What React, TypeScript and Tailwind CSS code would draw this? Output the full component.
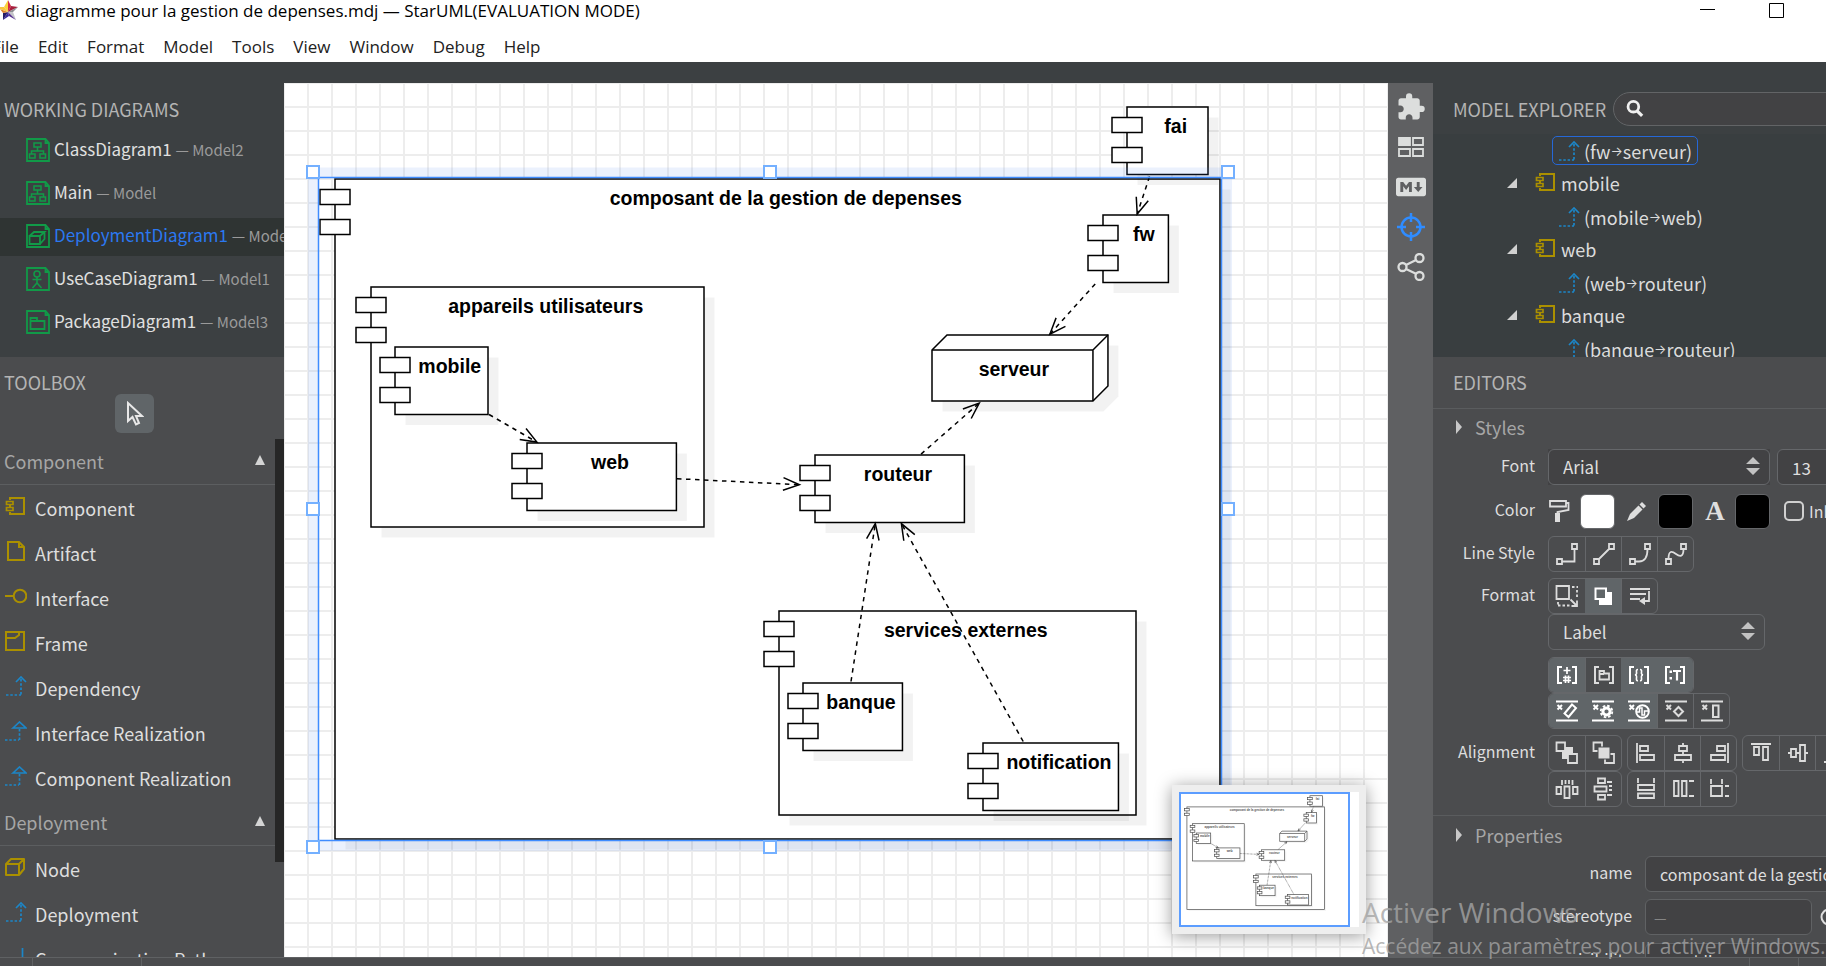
import React from "react";
import { MdExtension } from "react-icons/md";
import { FaMarkdown } from "react-icons/fa";

type Box = { label: string; x: number; y: number; r: number; b: number };

const COMPONENTS: Box[] = [
  { label: "composant de la gestion de depenses", x: 34, y: 64, r: 624, b: 504 },
  { label: "appareils utilisateurs", x: 58, y: 136, r: 280, b: 296 },
  { label: "mobile", x: 74, y: 176, r: 136, b: 221 },
  { label: "web", x: 162, y: 240, r: 261.6, b: 285 },
  { label: "fai", x: 562, y: 16, r: 616, b: 61 },
  { label: "fw", x: 546, y: 88, r: 589.6, b: 133 },
  { label: "routeur", x: 354, y: 248, r: 453.6, b: 293 },
  { label: "services externes", x: 330, y: 352, r: 568, b: 488 },
  { label: "banque", x: 346, y: 400, r: 412.3, b: 445 },
  { label: "notification", x: 466, y: 440, r: 556.3, b: 485 },
];

const LINKS: [number, number, number, number][] = [
  [136.7, 221, 168.6, 239.4],
  [262, 263.8, 343.6, 267.8],
  [424.7, 247.4, 463.5, 213.4],
  [540.8, 134, 510.6, 167.4],
  [577, 62.4, 568.8, 87.4],
  [378, 399, 394.2, 293.7],
  [492.8, 439, 411.6, 293.7],
];

function ComponentShape({ label, x, y, r, b }: Box) {
  const w = r - x;
  return (
    <g stroke="#000" fill="#fff">
      <rect x={x + 7} y={y + 7} width={w} height={b - y} fill="#000" fillOpacity={0.05} stroke="none" />
      <rect x={x} y={y} width={w} height={b - y} />
      <rect x={x - 10} y={y + 7} width={20} height={10} />
      <rect x={x - 10} y={y + 27} width={20} height={10} />
      <text
        x={x + (w + 11) / 2}
        y={y + 17.5}
        textAnchor="middle"
        stroke="none"
        fill="#000"
        className="font-['Liberation_Sans',Arial,sans-serif] text-[13px] font-bold"
      >
        {label}
      </text>
    </g>
  );
}

function Link({ p }: { p: [number, number, number, number] }) {
  const [x1, y1, x2, y2] = p;
  const len = Math.hypot(x2 - x1, y2 - y1);
  const ux = (x2 - x1) / len;
  const uy = (y2 - y1) / len;
  const bx = x2 - ux * 10.8;
  const by = y2 - uy * 10.8;
  return (
    <g stroke="#000" fill="none">
      <line x1={x1} y1={y1} x2={x2} y2={y2} strokeDasharray="3 3" />
      <path d={`M${bx - uy * 4.2} ${by + ux * 4.2}L${x2} ${y2}L${bx + uy * 4.2} ${by - ux * 4.2}`} />
    </g>
  );
}

function Diagram() {
  return (
    <g>
      {COMPONENTS.map((c) => (
        <ComponentShape key={c.label} {...c} />
      ))}
      <g stroke="#000" fill="#fff">
        <path d="M439 219V185L449 175H556.3V209L546.3 219Z" fill="#000" fillOpacity={0.05} stroke="none" />
        <path d="M432 178L442 168H549.3V202L539.3 212H432Z" />
        <path d="M432 178H539.3V212M539.3 178L549.3 168" fill="none" />
        <text
          x={486.6}
          y={195.5}
          textAnchor="middle"
          stroke="none"
          fill="#000"
          className="font-['Liberation_Sans',Arial,sans-serif] text-[13px] font-bold"
        >
          serveur
        </text>
      </g>
      {LINKS.map((p, i) => (
        <Link key={i} p={p} />
      ))}
    </g>
  );
}

const HANDLES = [
  [29, 89],
  [486, 89],
  [944, 89],
  [29, 426],
  [944, 426],
  [29, 764],
  [486, 764],
];

function Canvas() {
  return (
    <main className="relative min-w-0 flex-1 overflow-hidden bg-white">
      <svg className="block h-full w-full" role="img" aria-label="Deployment diagram">
        <defs>
          <pattern id="grid" width="24" height="24" patternUnits="userSpaceOnUse">
            <path d="M0 0H24V24H0ZM1 1V23H23V1Z" fill="#ededed" fillRule="evenodd" />
          </pattern>
        </defs>
        <rect width="100%" height="100%" fill="url(#grid)" />
        <g transform="scale(1.5)">
          <Diagram />
        </g>
        <path fillRule="evenodd" d="M24 84.5H948V768H24ZM35 95V757H937V95Z" fill="#4a80f0" fillOpacity={0.11} />
        <rect x={34.5} y={94.5} width={903} height={663} fill="none" stroke="#3f8cff" strokeWidth={1.5} />
        {HANDLES.map(([x, y]) => (
          <rect key={`${x}-${y}`} x={x - 6} y={y - 6} width={12} height={12} fill="#fff" stroke="#74b0ff" strokeWidth={2} />
        ))}
      </svg>
      <div className="absolute right-[22px] bottom-[23px] h-[149px] w-[194px] bg-[#eeeeee] p-[7px] shadow-[0_2px_16px_rgba(0,0,0,0.4)]">
        <div className="h-full w-full bg-white">
          <div className="h-full w-[171px] border-2 border-[#5c9dff]">
            <svg className="block h-full w-full overflow-visible" aria-hidden="true">
              <g transform="translate(-2 -2) scale(0.233)" strokeWidth={3} opacity={0.7}>
                <Diagram />
              </g>
            </svg>
          </div>
        </div>
      </div>
    </main>
  );
}

/* ---------- icons ---------- */

function ComponentIcon() {
  return (
    <svg width="20" height="18" viewBox="0 0 20 18" fill="none" stroke="#ab9000" strokeWidth="2" aria-hidden="true" className="shrink-0">
      <path d="M5 3V1H19V17H5V15M5 8V10" />
      <path d="M1.5 4.5H8V7.5H1.5ZM1.5 10.5H8V13.5H1.5Z" strokeWidth="1.7" />
    </svg>
  );
}
function ArtifactIcon() {
  return (
    <svg width="20" height="20" viewBox="0 0 20 20" fill="none" stroke="#ab9000" strokeWidth="2" aria-hidden="true">
      <path d="M3 1H14L19 6V19H3ZM14 1V6H19" />
    </svg>
  );
}
function InterfaceIcon() {
  return (
    <svg width="22" height="16" viewBox="0 0 22 16" fill="none" stroke="#ab9000" strokeWidth="2" aria-hidden="true">
      <path d="M0 8H8" />
      <circle cx="15" cy="8" r="6.3" />
    </svg>
  );
}
function FrameIcon() {
  return (
    <svg width="20" height="20" viewBox="0 0 20 20" fill="none" stroke="#ab9000" strokeWidth="2" aria-hidden="true">
      <path d="M1 1H19V19H1ZM1 7H10L14 4V1" />
    </svg>
  );
}
function NodeIcon() {
  return (
    <svg width="20" height="18" viewBox="0 0 20 18" fill="none" stroke="#ab9000" strokeWidth="2" strokeLinejoin="round" aria-hidden="true">
      <path d="M1 6H14V17H1ZM1 6L6 1H19L14 6M19 1V11L14 17" />
    </svg>
  );
}
function DependencyIcon() {
  return (
    <svg width="22" height="20" viewBox="0 0 22 20" fill="none" stroke="#1c86c8" strokeWidth="1.7" aria-hidden="true" className="shrink-0">
      <path d="M11 6L16 1L21 6" />
      <path d="M16 3V19M1 19H16" strokeDasharray="2.5 1.8" />
    </svg>
  );
}
function RealizationIcon() {
  return (
    <svg width="22" height="20" viewBox="0 0 22 20" fill="none" stroke="#1c86c8" strokeWidth="1.7" aria-hidden="true">
      <path d="M8 7L14.5 1L21 7Z" />
      <path d="M14.5 8V19M0 19H14" strokeDasharray="2.5 1.8" />
    </svg>
  );
}
function PathIcon() {
  return (
    <svg width="22" height="20" viewBox="0 0 22 20" fill="none" stroke="#1c86c8" strokeWidth="1.7" aria-hidden="true">
      <path d="M17.5 1V19H1" />
    </svg>
  );
}

function DocIcon({ children }: { children: React.ReactNode }) {
  return (
    <svg width="24" height="24" viewBox="0 0 24 24" fill="none" stroke="#119a48" strokeWidth="1.8" aria-hidden="true" className="shrink-0">
      <path d="M1 1H19.5L23 5V23H1ZM19.5 1V5H23" />
      {children}
    </svg>
  );
}
const classGlyph = <path d="M8 5H15V9H8ZM11.5 9V13M5.5 16V13H17.5V16M3.5 16H9V20H3.5ZM14 16H19.5V20H14Z" strokeWidth="1.5" />;
const cubeGlyph = <path d="M3.5 12H14V20H3.5ZM3.5 12L8 8H18.5L14 12M18.5 8V15L14 20" strokeWidth="1.8" />;
const actorGlyph = (
  <g strokeWidth="1.6">
    <circle cx="11" cy="7" r="3" />
    <path d="M11 10V16M6.5 12.5H15.5M6.5 21L11 16L15.5 21" />
  </g>
);
const packageGlyph = <path d="M4.5 8H11V11H18.5V19H4.5ZM4.5 11H11" strokeWidth="1.8" />;

function I({ children }: { children: React.ReactNode }) {
  return (
    <svg width="24" height="24" viewBox="0 0 24 24" fill="none" stroke="currentColor" strokeWidth="1.8" aria-hidden="true" className="shrink-0">
      {children}
    </svg>
  );
}

const lineStyles: [string, React.ReactNode][] = [
  ["Rectilinear", <path d="M2 17H7V22H2ZM17 2H22V7H17ZM7 19.5H19.5V7" />],
  ["Oblique", <path d="M2 17H7V22H2ZM17 2H22V7H17ZM7 17L17 7" />],
  ["Rounded rectilinear", <path d="M2 17H7V22H2ZM17 2H22V7H17ZM7 19.5H11Q19.5 19.5 19.5 7" />],
  ["Curve", <path d="M2 17H7V22H2ZM17 2H22V7H17ZM4.5 17C4.5 8 8 9 12 12S19.5 15 19.5 7" />],
];

const formatIcons: [string, React.ReactNode, boolean][] = [
  [
    "Auto resize",
    <g>
      <path d="M1.5 2H14V15H1.5Z" />
      <path d="M17 3H23M22 6V14M3 18V22M3 21.5H15" strokeDasharray="2.5 2" />
      <path d="M15.5 15.5L22 22M22 16.5V22H16.5" />
    </g>,
    false,
  ],
  [
    "Show shadow",
    <g>
      <path d="M8 8H21V21H8Z" fill="currentColor" stroke="none" />
      <path d="M4.5 4.5H15V15H4.5Z" fill="#606668" strokeWidth="2" />
    </g>,
    true,
  ],
  [
    "Word wrap",
    <g>
      <path d="M2 5H22M2 10H18M2 15H12M21 7V17H14" />
      <path d="M17 13V21L11 17Z" fill="currentColor" stroke="none" />
    </g>,
    false,
  ],
];

const bracket = <path d="M7 4H3V20H7M17 4H21V20H17" strokeWidth="2" />;
const bracketIcons: [string, React.ReactNode, boolean][] = [
  ["Show visibility", <g>{bracket}<path d="M12 4V11M8.5 7.5H15.5M10.5 12.5V20M13.5 12.5V20M8 14.5H16M8 17.5H16" strokeWidth="1.7" /></g>, true],
  ["Show namespace", <g>{bracket}<path d="M7.5 8H12V10.5H17V16.5H7.5ZM7.5 11H12" strokeWidth="1.8" /></g>, false],
  ["Show property", <g>{bracket}<path d="M11 6.5Q9 6.5 9.5 9T8 12Q10 12 9.5 15T11 17.5M13 6.5Q15 6.5 14.5 9T16 12Q14 12 14.5 15T13 17.5" strokeWidth="1.6" /></g>, true],
  ["Show type", <g>{bracket}<path d="M10 8H18M14 8V17.5" strokeWidth="2.2" /><path d="M6.5 7.5H9V10H6.5ZM6.5 14H9V16.5H6.5Z" fill="currentColor" stroke="none" /></g>, true],
];

const bars = <path d="M1 2.5H23M1 21.5H23M2.5 6L7 10.5M7 6L2.5 10.5" strokeWidth="2" />;
const suppressIcons: [string, React.ReactNode, boolean][] = [
  ["Suppress attributes", <g>{bars}<path d="M17 5.5L21 9L13.5 18L9.5 14.5Z" strokeWidth="2" /></g>, true],
  [
    "Suppress operations",
    <g>
      {bars}
      <circle cx="15.5" cy="12.5" r="3.6" strokeWidth="3" />
      <circle cx="15.5" cy="12.5" r="5.8" strokeWidth="1.8" strokeDasharray="2.6 1.95" />
    </g>,
    true,
  ],
  ["Suppress receptions", <g>{bars}<circle cx="15.5" cy="12.5" r="6.3" strokeWidth="2" /><path d="M9.5 13H12.5V9H15V16H17.5V12H22" strokeWidth="1.5" /></g>, true],
  ["Suppress literals", <g>{bars}<path d="M14.5 8L19 12.5L14.5 17L10 12.5Z" strokeWidth="2" /></g>, false],
  ["Suppress columns", <g>{bars}<path d="M13 6.5H18.5V18H13Z" strokeWidth="2" /></g>, false],
];

type Named = [string, React.ReactNode];
const alignRow1: Named[][] = [
  [
    ["Bring to front", <g><path d="M7 6H18V18H7Z" fill="currentColor" stroke="none" /><path d="M1.5 1.5H10V10H1.500ZM13 13H22V22H13Z" fill="#4b4c4e" /></g>],
    ["Send to back", <g><path d="M1.5 1.5H10V10H1.500ZM13 13H22V22H13Z" /><path d="M6 6H18V18H6Z" fill="currentColor" stroke="#4b4c4e" strokeWidth="1" /></g>],
  ],
  [
    ["Align left", <path d="M3 2V22M6 5H14V10H6ZM6 14H20V19H6Z" />],
    ["Align center", <path d="M12 2V5M12 10V14M12 19V22M8 5H16V10H8ZM4 14H20V19H4Z" />],
    ["Align right", <path d="M21 2V22M10 5H18V10H10ZM4 14H18V19H4Z" />],
  ],
  [
    ["Align top", <path d="M2 3H22M5 6H10V14H5ZM14 6H19V19H14Z" />],
    ["Align middle", <path d="M2 12H5M10 12H14M19 12H22M5 8H10V16H5ZM14 4H19V20H14Z" />],
    ["Align bottom", <path d="M2 21H22M5 10H10V18H5ZM14 5H19V18H14Z" />],
  ],
];
const alignRow2: Named[][] = [
  [
    ["Space equally horizontally", <path d="M1.5 10H6V17H1.500ZM9.500 9.500H14.500V21H9.500ZM18 10H22.500V17H18ZM7 3V8M10.500 3V7M14 3V7M17.500 3V8" />],
    ["Space equally vertically", <path d="M6 1.500H13V6H6ZM2.500 9.500H14.500V14.500H2.500ZM6 18H13V22.500H6ZM15 5H20M17 9H20M17 13H20M15 18H20" />],
  ],
  [
    ["Same width", <path d="M4 1V6M20 1V6M4 8H20V13H4ZM4 16.500H20V21H4Z" />],
    ["Same height", <path d="M3 4H7.500V19H3ZM11 4H15.500V19H11ZM18 4H23M18 19H23" />],
    ["Same size", <path d="M4 2V7M15 2V7M4 9H15V19H4ZM18 9H22M18 19H22" />],
  ],
];

function ToolGroup({ items }: { items: [string, React.ReactNode, boolean?][] }) {
  return (
    <div className="flex h-9 shrink-0 overflow-hidden rounded-md border border-[#65676a]">
      {items.map(([name, icon, on], i) => (
        <button
          key={name}
          type="button"
          aria-label={name}
          className={
            "flex w-9 items-center justify-center " +
            (on ? "bg-[#606568] text-white" : i > 0 ? "border-l border-[#65676a] text-[#dcdcdc]" : "text-[#dcdcdc]")
          }
        >
          <I>{icon}</I>
        </button>
      ))}
    </div>
  );
}

function SelectBox({ id, label, value, className }: { id: string; label?: string; value: string; className: string }) {
  return (
    <div className={"relative h-9 shrink-0 " + className}>
      <select id={id} aria-label={label} defaultValue={value} className="h-full w-full appearance-none rounded-md border border-[#65676a] bg-inherit pl-3.5 text-[17px] text-[#dedede]">
        <option>{value}</option>
      </select>
      <svg className="pointer-events-none absolute top-2 right-2.5" width="14" height="18" viewBox="0 0 14 18" fill="#c2c2c2" aria-hidden="true">
        <path d="M7 0L14 7H0ZM7 18L0 11H14Z" />
      </svg>
    </div>
  );
}

/* ---------- panels ---------- */

const MENUS = ["File", "Edit", "Format", "Model", "Tools", "View", "Window", "Debug", "Help"];

function TitleBar() {
  return (
    <header className="h-[62px] shrink-0 overflow-hidden bg-white font-['Open_Sans',sans-serif] text-black">
      <div className="flex h-[22px] items-center">
        <svg width="19" height="22" viewBox="0 0 19 22" aria-hidden="true" className="shrink-0">
          <path d="M8 0L8 12L4 7Z" fill="#fbd23c" />
          <path d="M8 0L11 6L8 12Z" fill="#d32b45" />
          <path d="M11 6L18 7L8 12Z" fill="#a81f3c" />
          <path d="M18 7L13 12L8 12Z" fill="#8c8c90" />
          <path d="M13 12L16 20L8 12Z" fill="#c4c4c8" />
          <path d="M16 20L9 16L8 12Z" fill="#55308c" />
          <path d="M9 16L3 20L8 12Z" fill="#3a2a9c" />
          <path d="M3 20L3 13L8 12Z" fill="#241c66" />
          <path d="M0 9L8 12L3 13Z" fill="#e0832c" />
          <path d="M0 7L4 7L8 12L0 9Z" fill="#f6c63c" />
        </svg>
        <h1 className="ml-1.5 text-[17px] whitespace-nowrap">diagramme pour la gestion de depenses.mdj — StarUML(EVALUATION MODE)</h1>
        <div className="ml-auto flex items-center">
          <button type="button" aria-label="Minimize" className="mr-[54px] flex">
            <svg width="15" height="16" viewBox="0 0 15 16" stroke="#000"><path d="M0 6.500H15" /></svg>
          </button>
          <button type="button" aria-label="Maximize" className="mr-[42px] flex">
            <svg width="15" height="16" viewBox="0 0 15 16" fill="none" stroke="#000"><path d="M.5 .5H14.500V14.500H.5Z" /></svg>
          </button>
        </div>
      </div>
      <nav className="-ml-2 flex h-[49px] items-center gap-[19px]">
        {MENUS.map((m) => (
          <button key={m} type="button" className="text-[17px] text-[#222]">
            {m}
          </button>
        ))}
      </nav>
    </header>
  );
}

const DIAGRAMS: [string, string, React.ReactNode, boolean][] = [
  ["ClassDiagram1", "Model2", classGlyph, false],
  ["Main", "Model", classGlyph, false],
  ["DeploymentDiagram1", "Model", cubeGlyph, true],
  ["UseCaseDiagram1", "Model1", actorGlyph, false],
  ["PackageDiagram1", "Model3", packageGlyph, false],
];

const SECTIONS: [string, [string, React.ReactNode][]][] = [
  [
    "Component",
    [
      ["Component", <ComponentIcon />],
      ["Artifact", <ArtifactIcon />],
      ["Interface", <InterfaceIcon />],
      ["Frame", <FrameIcon />],
      ["Dependency", <DependencyIcon />],
      ["Interface Realization", <RealizationIcon />],
      ["Component Realization", <RealizationIcon />],
    ],
  ],
  [
    "Deployment",
    [
      ["Node", <NodeIcon />],
      ["Deployment", <DependencyIcon />],
      ["Communication Path", <PathIcon />],
    ],
  ],
];

function LeftPanel() {
  return (
    <aside className="flex w-[284px] shrink-0 flex-col overflow-hidden">
      <section className="h-[274px] shrink-0 bg-[#3c4042]">
        <h2 className="flex h-12 items-center pt-1 pl-1 text-[18px] text-[#b4b4b4]">WORKING DIAGRAMS</h2>
        <ul className="flex flex-col gap-[5px] pt-px">
          {DIAGRAMS.map(([name, model, glyph, active]) => (
            <li key={name}>
              <a
                href="#"
                className={
                  "flex h-[38px] items-center gap-1 pb-0.5 pl-[26px] text-[17px] whitespace-nowrap " +
                  (active ? "bg-[#2f3433] text-[#2b78f0]" : "text-[#e0e0e0]")
                }
              >
                <DocIcon>{glyph}</DocIcon>
                <span className="pb-0.5">
                  {name} <span className="text-[15px] text-[#9a9a9a]">— {model}</span>
                </span>
              </a>
            </li>
          ))}
        </ul>
      </section>
      <section className="flex min-h-0 flex-1 flex-col bg-[#4b4c4e]">
        <h2 className="flex h-[37px] shrink-0 items-end pl-1 text-[18px] text-[#b4b4b4]">TOOLBOX</h2>
        <div className="flex h-[45px] shrink-0 justify-center pr-[15px]">
          <button type="button" aria-label="Select" className="flex h-[39px] w-[39px] items-center justify-center rounded-md bg-[#606568]">
            <svg width="18" height="25" viewBox="0 0 18 25" fill="none" stroke="#e8e8e8" strokeWidth="2" aria-hidden="true">
              <path d="M2 2V20L6.500 16L10 23.500L13 22L10 15H16Z" />
            </svg>
          </button>
        </div>
        <div className="flex min-h-0 flex-1">
          <div className="min-w-0 flex-1 overflow-hidden">
            {SECTIONS.map(([title, items]) => (
              <div key={title}>
                <button type="button" className="flex h-[46px] w-full items-center justify-between border-b border-[#5c5e60] pr-[10px] pb-0.5 pl-1 text-[18px] text-[#a6a6a6]">
                  {title}
                  <svg width="10" height="10" viewBox="0 0 10 10" fill="#d4d4d4" aria-hidden="true" className="mb-0.5"><path d="M5 0L10 10H0Z" /></svg>
                </button>
                <ul>
                  {items.map(([name, icon]) => (
                    <li key={name}>
                      <button type="button" className="flex h-[45px] w-full items-center text-[18px] whitespace-nowrap text-[#dedede]">
                        <span className="flex w-[35px] shrink-0 pb-1 pl-[5px]">{icon}</span>
                        {name}
                      </button>
                    </li>
                  ))}
                </ul>
              </div>
            ))}
          </div>
          <div className="h-[423px] w-[9px] shrink-0 bg-[#262626]" />
        </div>
      </section>
    </aside>
  );
}

function SideBar() {
  return (
    <nav className="flex w-[45px] shrink-0 flex-col items-center bg-[#5f6062] pt-1 text-[#dcdedd]">
      <button type="button" aria-label="Extensions" className="flex h-10 items-center"><MdExtension size={30} /></button>
      <button type="button" aria-label="Layout" className="flex h-10 items-center">
        <svg width="26" height="20" viewBox="0 0 26 20" fill="none" stroke="currentColor" strokeWidth="1.8">
          <path d="M1 1H12V8H1Z" fill="currentColor" />
          <path d="M15 1H25V8H15ZM1 12H12V19H1ZM15 12H25V19H15Z" />
        </svg>
      </button>
      <button type="button" aria-label="Markdown" className="flex h-10 items-center"><FaMarkdown size={30} /></button>
      <button type="button" aria-label="Navigator" className="flex h-10 items-center text-[#2f8cff]">
        <svg width="28" height="28" viewBox="0 0 28 28" fill="none" stroke="currentColor" strokeWidth="2.5">
          <circle cx="14" cy="14" r="9.5" />
          <path d="M14 0V9M14 19V28M0 14H9M19 14H28" />
        </svg>
      </button>
      <button type="button" aria-label="Relationships" className="flex h-10 items-center">
        <svg width="28" height="28" viewBox="0 0 28 28" fill="none" stroke="currentColor" strokeWidth="2.3">
          <circle cx="5.5" cy="14" r="4" />
          <circle cx="22.5" cy="5" r="4" />
          <circle cx="22.5" cy="23" r="4" />
          <path d="M9 12L19 7M9 16L19.500 21" />
        </svg>
      </button>
    </nav>
  );
}

type Row = { from?: string; to?: string; name?: string; selected?: boolean };
const TREE: Row[] = [
  { from: "fw", to: "serveur", selected: true },
  { name: "mobile" },
  { from: "mobile", to: "web" },
  { name: "web" },
  { from: "web", to: "routeur" },
  { name: "banque" },
  { from: "banque", to: "routeur" },
];

function ModelExplorer() {
  return (
    <section className="flex h-[274px] shrink-0 flex-col bg-[#3c4042]">
      <div className="flex h-[51px] shrink-0 items-center">
        <h2 className="w-[180px] shrink-0 pl-5 text-[18px] whitespace-nowrap text-[#b4b4b4]">MODEL EXPLORER</h2>
        <label className="flex h-[34px] w-[240px] shrink-0 items-center rounded-full border border-[#626466] bg-[#424244] pl-3">
          <svg width="19" height="19" viewBox="0 0 19 19" fill="none" stroke="#f0f0f0" strokeWidth="3" aria-hidden="true">
            <circle cx="8" cy="7.5" r="5.8" />
            <path d="M12 12L17.500 17.500" strokeWidth="3.5" />
          </svg>
          <input type="search" aria-label="Search model" className="w-full bg-transparent text-[17px] text-white outline-none" />
        </label>
      </div>
      <ul className="min-h-0 flex-1 overflow-hidden bg-[#393e40] text-[18px] text-[#dcdcdc]">
        {TREE.map((r, i) =>
          r.name ? (
            <li key={i} className="flex h-[33px] items-center pb-0.5 pl-[74px]">
              <svg width="10" height="10" viewBox="0 0 10 10" fill="#d0d0d0" aria-hidden="true"><path d="M10 0V10H0Z" /></svg>
              <span className="ml-[18px] flex pb-0.5"><ComponentIcon /></span>
              <span className="ml-1.5">{r.name}</span>
            </li>
          ) : (
            <li key={i} className="flex h-[33px] items-center pl-[119px]">
              <span className={"flex h-[29px] items-center gap-1 rounded-[5px] border px-[5px] " + (r.selected ? "border-[#2668d8]" : "border-transparent")}>
                <DependencyIcon />
                <span className="flex items-center whitespace-nowrap">
                  <span>({r.from}</span>
                  <span className="font-['Inter',sans-serif] text-[13px]">→</span>
                  <span>{r.to})</span>
                </span>
              </span>
            </li>
          ),
        )}
      </ul>
    </section>
  );
}

function Label({ children, htmlFor, wide }: { children: React.ReactNode; htmlFor?: string; wide?: boolean }) {
  return (
    <label htmlFor={htmlFor} className={"mr-[13px] shrink-0 pb-1 text-right text-[16px] whitespace-nowrap " + (wide ? "w-[199px]" : "w-[102px]")}>
      {children}
    </label>
  );
}

const swatch = "h-[35px] w-[35px] shrink-0 rounded-md border border-[#65676a] ";

function Editors() {
  return (
    <section className="min-h-0 flex-1 overflow-hidden bg-[#4b4c4e] text-[#dedede]">
      <h2 className="flex h-[52px] items-center border-b border-[#5a5c5e] pb-0.5 pl-5 text-[18px] text-[#b4b4b4]">EDITORS</h2>
      <button type="button" className="flex h-10 items-center gap-[13px] pb-1 pl-[23px] text-[18px] text-[#a6a6a6]">
        <svg width="6" height="14" viewBox="0 0 6 14" fill="#c8c8c8" aria-hidden="true"><path d="M0 0L6 7L0 14Z" /></svg>
        Styles
      </button>
      <div className="flex h-9 items-center">
        <Label htmlFor="font">Font</Label>
        <SelectBox id="font" value="Arial" className="w-[222px] bg-[#424244]" />
        <input aria-label="Font size" defaultValue="13" className="ml-[7px] h-9 w-20 shrink-0 rounded-md border border-[#65676a] bg-[#424244] pl-3.5 text-[17px]" />
      </div>
      <div className="mt-2 flex h-9 items-center">
        <Label>Color</Label>
        <svg width="22" height="24" viewBox="0 0 22 24" fill="none" stroke="#dedede" strokeWidth="1.8" aria-hidden="true" className="shrink-0">
          <path d="M2 2H18V7.500H2ZM18 4H20.500V11L9.500 13V15" />
          <path d="M7 14H12V23H7Z" fill="#dedede" stroke="none" />
        </svg>
        <button type="button" aria-label="Fill color" className={swatch + "ml-[10px] bg-white"} />
        <svg width="19" height="19" viewBox="0 0 19 19" fill="#dedede" aria-hidden="true" className="ml-3 shrink-0">
          <path d="M0 19L3 12L11.500 3.500L15.500 7.500L7 16Z" />
          <path d="M12.500 2.500L15 0L19 4L16.500 6.500Z" />
        </svg>
        <button type="button" aria-label="Line color" className={swatch + "ml-3 bg-black"} />
        <span className="ml-3 w-5 shrink-0 text-center font-['Liberation_Serif',serif] text-[27px] leading-9 font-bold">A</span>
        <button type="button" aria-label="Font color" className={swatch + "ml-2.5 bg-black"} />
        <input id="inherit" type="checkbox" className="ml-[14px] h-5 w-5 shrink-0 appearance-none rounded-[5px] border-2 border-[#d0d0d0]" />
        <label htmlFor="inherit" className="ml-[5px] text-[16px]">Inherit</label>
      </div>
      <div className="mt-[7px] flex h-9 items-center">
        <Label>Line Style</Label>
        <ToolGroup items={lineStyles} />
      </div>
      <div className="mt-1.5 flex h-9 items-center">
        <Label>Format</Label>
        <ToolGroup items={formatIcons} />
      </div>
      <div className="ml-[115px] flex flex-col items-start">
        <SelectBox id="stereotype-display" label="Stereotype display" value="Label" className="w-[217px] bg-[#4b4c4e]" />
        <div className="mt-[7px]"><ToolGroup items={bracketIcons} /></div>
        <ToolGroup items={suppressIcons} />
      </div>
      <div className="mt-1.5 flex h-9 items-center">
        <Label>Alignment</Label>
        <div className="flex shrink-0 gap-[5px]">
          {alignRow1.map((g, i) => <ToolGroup key={i} items={g} />)}
        </div>
      </div>
      <div className="ml-[115px] flex gap-[5px]">
        {alignRow2.map((g, i) => <ToolGroup key={i} items={g} />)}
      </div>
      <button type="button" className="mt-2 flex h-[41px] w-full items-center gap-[13px] border-t border-[#5a5c5e] pb-0.5 pl-[23px] text-[18px] text-[#a6a6a6]">
        <svg width="6" height="14" viewBox="0 0 6 14" fill="#c8c8c8" aria-hidden="true"><path d="M0 0L6 7L0 14Z" /></svg>
        Properties
      </button>
      <div className="flex h-9 items-center">
        <Label htmlFor="name" wide>name</Label>
        <input id="name" defaultValue="composant de la gestion de depenses" className="h-9 w-[300px] shrink-0 rounded-md border border-[#606264] bg-[#424244] pl-3.5 text-[16px]" />
      </div>
      <div className="mt-[7px] flex h-9 items-center">
        <Label htmlFor="stereotype" wide>stereotype</Label>
        <input id="stereotype" placeholder="—" className="h-9 w-[167px] shrink-0 rounded-md border border-[#606264] bg-[#424244] pl-2 text-[14px] placeholder:text-[#858585]" />
        <svg width="18" height="18" viewBox="0 0 18 18" fill="none" stroke="#dedede" strokeWidth="2" aria-hidden="true" className="ml-2 shrink-0"><circle cx="9" cy="9" r="7.5" /></svg>
      </div>
      <div className="mt-2 flex h-9 items-center">
        <Label htmlFor="visibility" wide>visibility</Label>
        <input id="visibility" defaultValue="public" className="h-9 w-[300px] shrink-0 rounded-md border border-[#606264] bg-[#424244] pl-7 text-[16px]" />
      </div>
    </section>
  );
}

export default function App() {
  return (
    <div className="relative flex h-screen flex-col overflow-hidden bg-[#3c4042] font-['Noto_Sans_CJK_SC',sans-serif] leading-6">
      <TitleBar />
      <div className="h-[21px] shrink-0" />
      <div className="flex min-h-0 flex-1">
        <LeftPanel />
        <Canvas />
        <SideBar />
        <aside className="flex w-[393px] shrink-0 flex-col overflow-hidden">
          <ModelExplorer />
          <Editors />
        </aside>
      </div>
      <footer className="flex h-[9px] shrink-0 border-t border-[#5f6163] bg-[#4b4c4e]">
        <div className="w-[33px] border-r border-[#5f6163]" />
        <div className="w-[109px] border-r border-[#5f6163]" />
        <div className="ml-auto w-[50px] border-x border-[#5f6163]" />
        <div className="w-[27px]" />
      </footer>
      <div className="pointer-events-none absolute right-1 bottom-1 w-[460px] font-['Open_Sans',sans-serif] whitespace-nowrap text-[#a4a4a4]/80">
        <p className="text-[28px] leading-9">Activer Windows</p>
        <p className="text-[21px] leading-8">Accédez aux paramètres pour activer Windows.</p>
      </div>
    </div>
  );
}
